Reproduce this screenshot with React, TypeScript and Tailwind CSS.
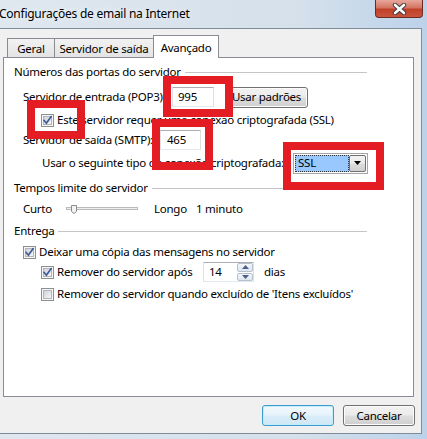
import React from "react"

const btnFace =
  "bg-[linear-gradient(to_bottom,#f2f2f2_0%,#ebebeb_48%,#dddddd_52%,#cfcfcf_100%)]"

function CheckBox({ checked }: { checked?: boolean }) {
  return (
    <svg width="13" height="13" viewBox="0 0 13 13" className="shrink-0">
      <defs>
        <linearGradient id="cbFill" x1="0" y1="0" x2="1" y2="1">
          <stop offset="0" stopColor="#cdd1d7" />
          <stop offset="1" stopColor="#f7f7f7" />
        </linearGradient>
      </defs>
      <rect x="0.5" y="0.5" width="12" height="12" fill="#f5f5f5" stroke="#8e8f8f" />
      <rect x="2.5" y="2.5" width="8" height="8" fill="url(#cbFill)" stroke="#b2b6bc" />
      {checked && (
        <path d="M3 6.3 L5.4 9.2 L10.2 2.6" fill="none" stroke="#3f5a99" strokeWidth="1.7" strokeLinecap="round" />
      )}
    </svg>
  )
}

function GroupHeader({ children }: { children: React.ReactNode }) {
  return (
    <div className="ml-[10px] w-[353px] h-[20px] flex items-center">
      <span>{children}</span>
      <div className="flex-1 ml-[4px] h-px bg-[#c5c5c5]" />
    </div>
  )
}

function Slider() {
  return (
    <svg width="72" height="16" viewBox="0 0 72 16" className="shrink-0">
      <rect x="0.5" y="6.5" width="71" height="2" fill="#eef0f0" stroke="#b8babd" />
      <path d="M5.5 4.5 H10.5 V10.5 L8 12.5 L5.5 10.5 Z" fill="#f3f3f3" stroke="#8a8d91" />
    </svg>
  )
}

function RedBox({ className }: { className: string }) {
  return <div className={`absolute border-[8px] border-[#e41c24] z-20 ${className}`} />
}

export default function App() {
  return (
    <div className="w-[427px] h-[439px] relative overflow-hidden bg-[linear-gradient(to_right,#dfe7ef_0%,#d5e0eb_70%,#bcd2ea_100%)] font-['Noto_Sans',sans-serif] text-[11.5px] tracking-[-0.25px] text-black">
      {/* title bar */}
      <div className="h-[28px] flex items-start">
        <span className="-ml-[1px] mt-[5px] text-[12px] leading-[18px] [text-shadow:0_0_6px_#ffffff]">
          Configurações de email na Internet
        </span>
        <div className="ml-auto mr-[4px] w-[48px] h-[18px] rounded-b-[4px] border border-t-0 border-[#6e2a22] bg-[linear-gradient(to_bottom,#e8a89c_0%,#d47563_45%,#c1402a_55%,#c9543c_100%)] flex items-center justify-center">
          <svg width="15" height="12" viewBox="0 0 15 12">
            <path d="M3 2 L12 10 M12 2 L3 10" stroke="#3b3b3b" strokeWidth="4.4" strokeLinecap="round" />
            <path d="M3 2 L12 10 M12 2 L3 10" stroke="#ffffff" strokeWidth="2.6" strokeLinecap="round" />
          </svg>
        </div>
      </div>

      {/* client area */}
      <div className="-ml-[1px] w-[423px] h-[406px] border border-[#7f8d9b] bg-[#f0f0f0] flex flex-col">
        {/* tabs */}
        <div className="mt-[5px] h-[24px] flex items-end pl-[7px] relative z-10">
          <div className="w-[48px] h-[19px] mb-[1px] border border-b-0 border-[#898c95] bg-[linear-gradient(to_bottom,#f2f2f2,#e3e3e3)] flex items-center justify-center pt-[1px]">
            Geral
          </div>
          <div className="-ml-px w-[100px] h-[19px] mb-[1px] border border-b-0 border-[#898c95] bg-[linear-gradient(to_bottom,#f2f2f2,#e3e3e3)] flex items-center justify-center pt-[1px]">
            Servidor de saída
          </div>
          <div className="-ml-px w-[66px] h-[23px] border border-b-0 border-[#898c95] bg-white flex items-start justify-center pt-[3px]">
            Avançado
          </div>
        </div>

        {/* tab panel */}
        <div className="-mt-px ml-[3px] w-[411px] h-[340px] border border-[#898c95] bg-white flex flex-col">
          <div className="mt-[4px]">
            <GroupHeader>Números das portas do servidor</GroupHeader>
          </div>

          <div className="mt-[5px] ml-[19px] h-[20px] flex items-center">
            <span className="w-[149px]">Servidor de entrada (POP3):</span>
            <div className="w-[42px] h-[20px] border border-[#abadb3] border-x-[#dbdfe6] border-b-[#e3e9ef] flex items-center pl-[5px]">
              995
            </div>
            <div className={`ml-[11px] w-[83px] h-[21px] rounded-[3px] border border-[#707070] ${btnFace} flex items-center justify-center shadow-[inset_0_0_0_1px_#fcfcfc]`}>
              Usar padrões
            </div>
          </div>

          <div className="mt-[3px] ml-[37px] h-[20px] flex items-center gap-[3px]">
            <CheckBox checked />
            <span>Este servidor requer uma conexão criptografada (SSL)</span>
          </div>

          <div className="ml-[19px] h-[20px] flex items-center">
            <span className="w-[137px]">Servidor de saída (SMTP):</span>
            <div className="w-[41px] h-[20px] border border-[#abadb3] border-x-[#dbdfe6] border-b-[#e3e9ef] flex items-center pl-[6px]">
              465
            </div>
          </div>

          <div className="mt-[3px] ml-[38px] h-[20px] flex items-center">
            <span className="w-[251px]">Usar o seguinte tipo de conexão criptografada:</span>
            <div className="w-[75px] h-[21px] border border-[#a5a5a5] bg-white flex p-[1px]">
              <div className="flex-1 bg-[#98c8fd] border border-dotted border-[#2b3440] flex items-center pl-[2px]">
                SSL
              </div>
              <div className={`w-[17px] rounded-[2px] border border-[#707070] ${btnFace} flex items-center justify-center`}>
                <svg width="7" height="4" viewBox="0 0 7 4">
                  <path d="M0 0 H7 L3.5 4 Z" fill="#000000" />
                </svg>
              </div>
            </div>
          </div>

          <div className="mt-[5px]">
            <GroupHeader>Tempos limite do servidor</GroupHeader>
          </div>

          <div className="mt-[1px] ml-[19px] h-[20px] flex items-center">
            <span className="w-[43px]">Curto</span>
            <Slider />
            <span className="ml-[16px] w-[42px]">Longo</span>
            <span>1 minuto</span>
          </div>

          <div className="mt-[2px]">
            <GroupHeader>Entrega</GroupHeader>
          </div>

          <div className="mt-[1px] ml-[19px] h-[20px] flex items-center gap-[3px]">
            <CheckBox checked />
            <span>Deixar uma cópia das mensagens no servidor</span>
          </div>

          <div className="ml-[37px] h-[20px] flex items-center">
            <CheckBox checked />
            <span className="ml-[3px] w-[146px]">Remover do servidor após</span>
            <div className="w-[51px] h-[20px] border border-[#abadb3] border-x-[#dbdfe6] border-b-[#e3e9ef] flex items-center">
              <span className="flex-1 pl-[5px]">14</span>
              <div className="w-[16px] h-[18px] flex flex-col gap-px">
                {[0, 1].map((i) => (
                  <div
                    key={i}
                    className="flex-1 rounded-[2px] border border-[#b4c0d0] bg-[linear-gradient(to_bottom,#f4f7fb,#dde5ef)] flex items-center justify-center"
                  >
                    <svg width="7" height="4" viewBox="0 0 7 4">
                      <path d={i === 0 ? "M0 4 H7 L3.5 0 Z" : "M0 0 H7 L3.5 4 Z"} fill="#4d5f86" />
                    </svg>
                  </div>
                ))}
              </div>
            </div>
            <span className="ml-[10px]">dias</span>
          </div>

          <div className="mt-[2px] ml-[37px] h-[20px] flex items-center gap-[3px]">
            <CheckBox />
            <span>Remover do servidor quando excluído de 'Itens excluídos'</span>
          </div>
        </div>

        {/* dialog buttons */}
        <div className="mt-[8px] pr-[6px] flex justify-end gap-[9px]">
          <div className="w-[72px] h-[21px] rounded-[3px] border border-[#3c9bd0] bg-[linear-gradient(to_bottom,#f1f9fd_0%,#e6f3fb_48%,#d8edf8_52%,#cfe7f5_100%)] shadow-[inset_0_0_0_1px_#c4ecfb] flex items-center justify-center">
            OK
          </div>
          <div className={`w-[72px] h-[21px] rounded-[3px] border border-[#707070] ${btnFace} shadow-[inset_0_0_0_1px_#fcfcfc] flex items-center justify-center`}>
            Cancelar
          </div>
        </div>
      </div>

      {/* red annotation boxes */}
      <RedBox className="left-[163px] top-[76px] w-[70px] h-[41px]" />
      <RedBox className="left-[27px] top-[100px] w-[58px] h-[39px]" />
      <RedBox className="left-[152px] top-[119px] w-[61px] h-[51px]" />
      <RedBox className="left-[283px] top-[142px] w-[101px] h-[48px]" />
    </div>
  )
}
